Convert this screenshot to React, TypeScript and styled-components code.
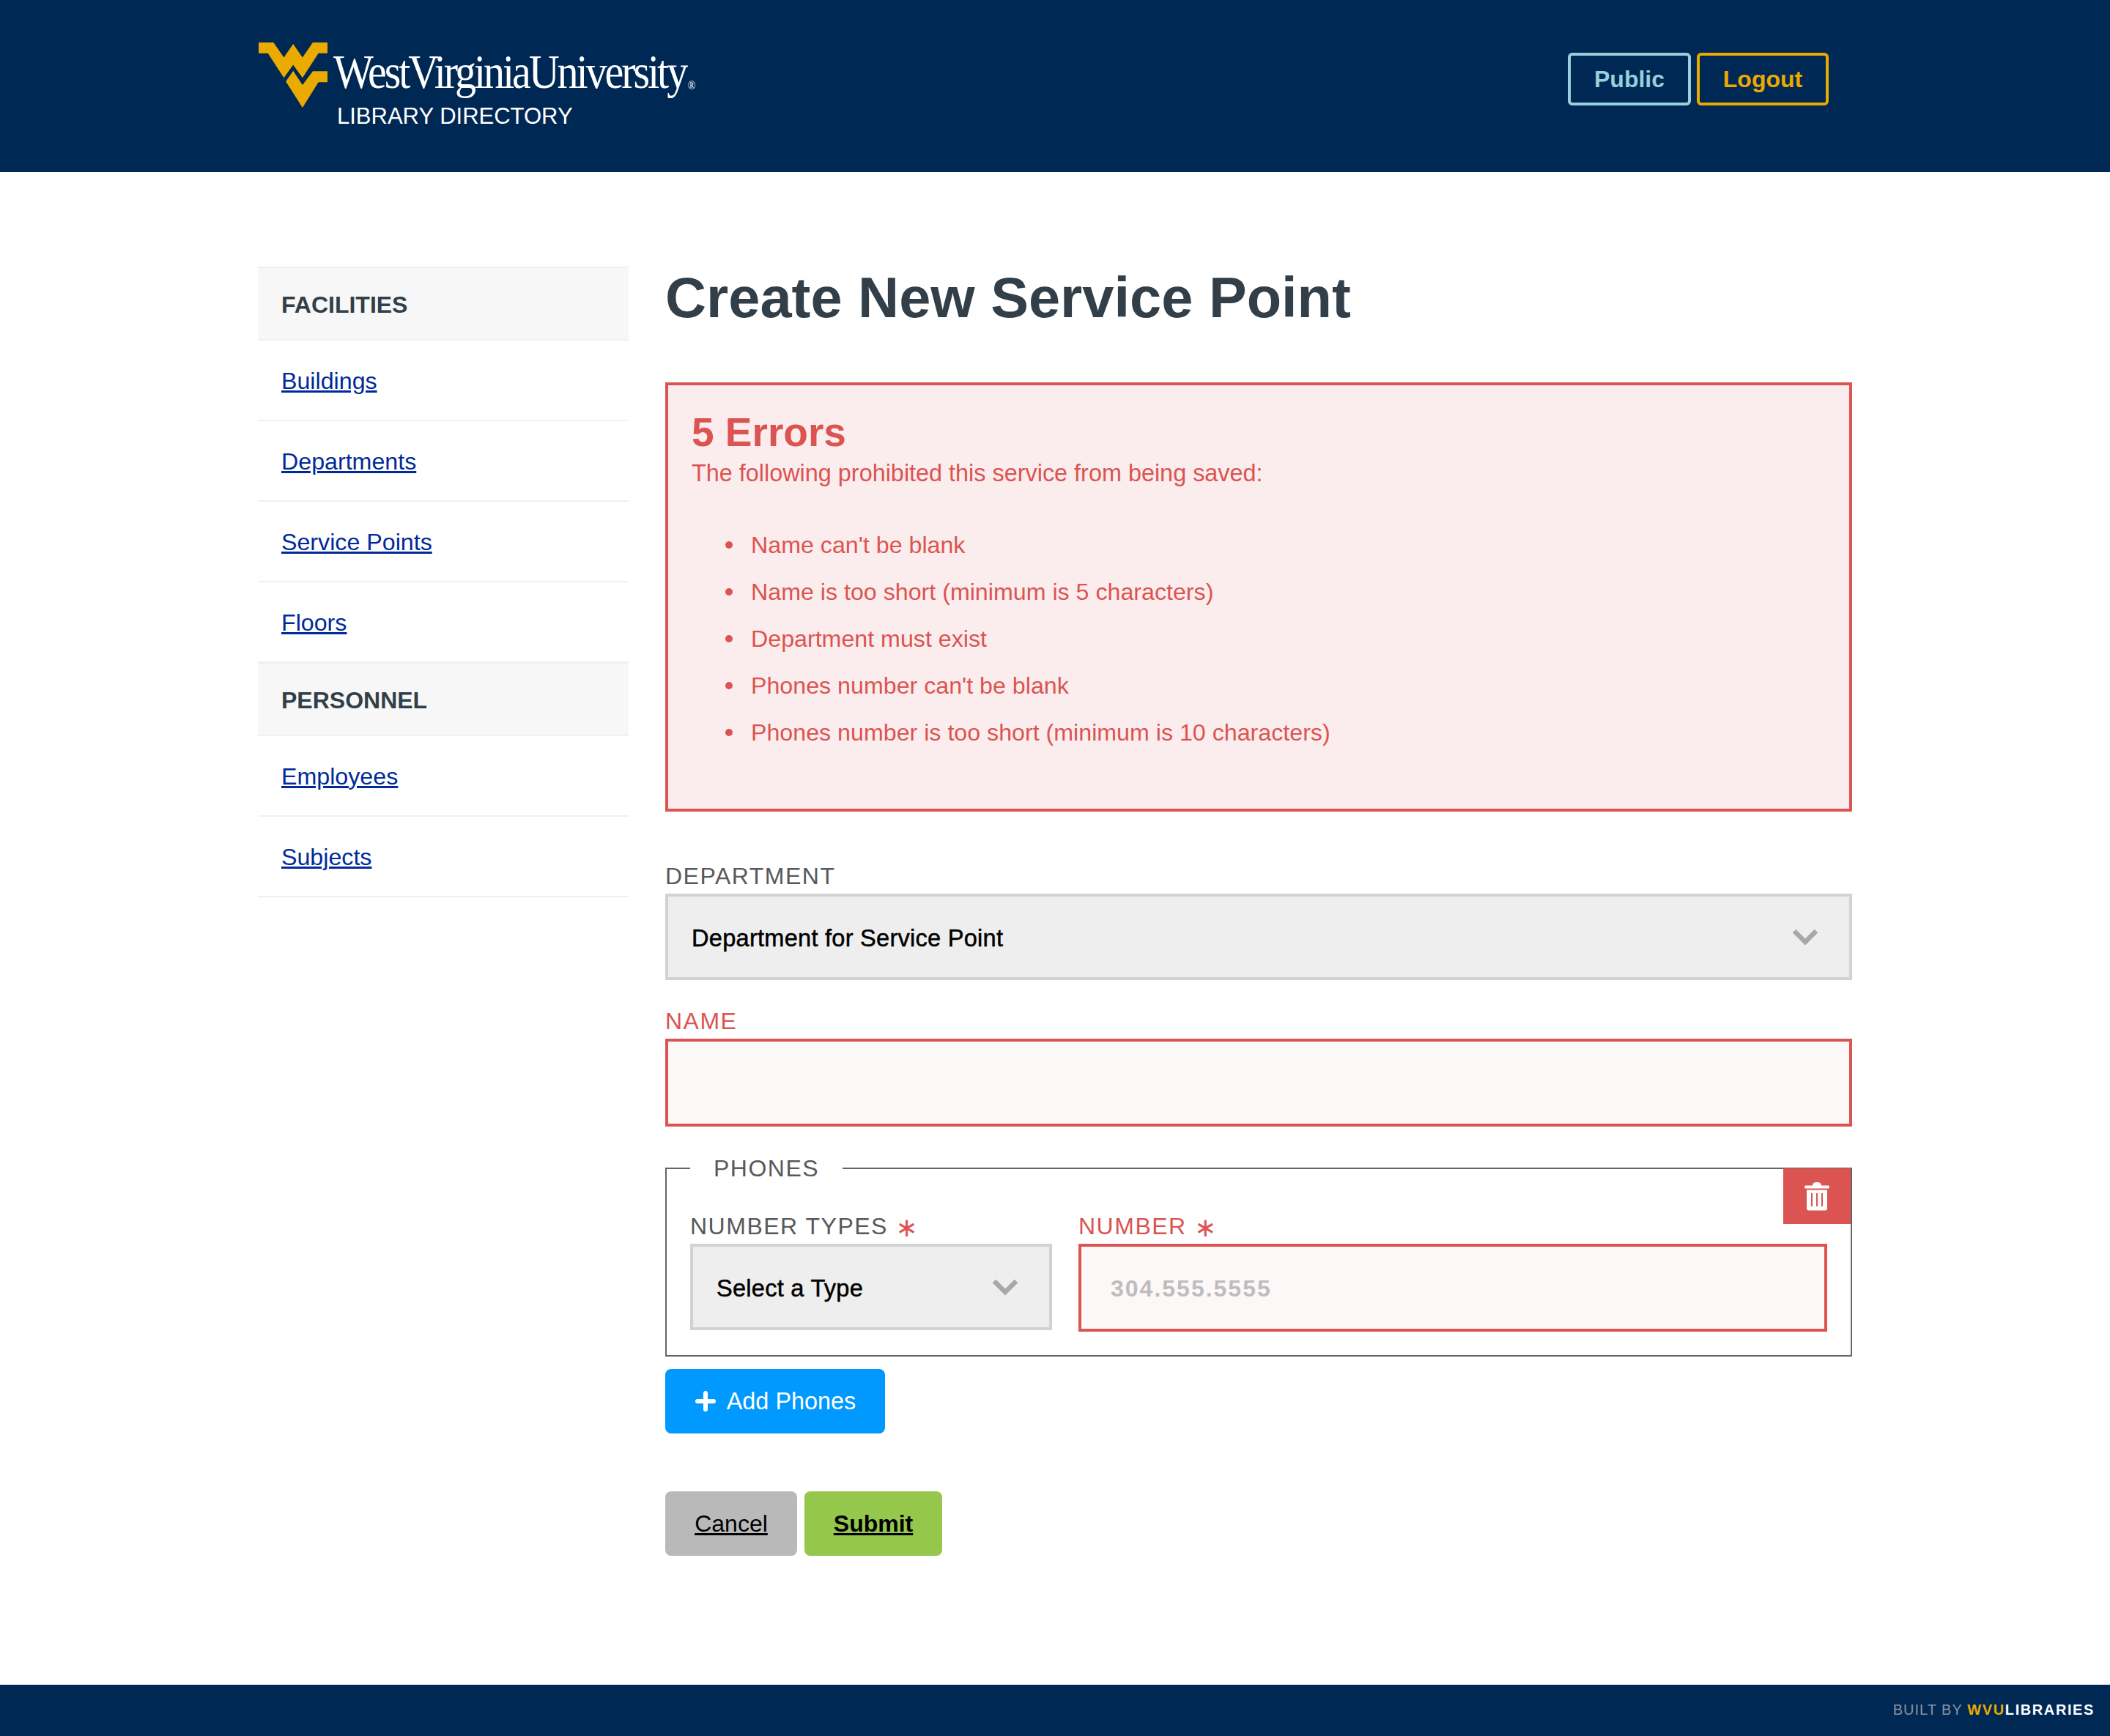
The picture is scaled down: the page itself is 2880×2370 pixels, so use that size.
import React from 'react';
import styled, { createGlobalStyle } from 'styled-components';

const NAVY = '#002855';
const GOLD = '#eaaa00';
const RED = '#db5451';
const SANS = '"Liberation Sans", Arial, sans-serif';

const GlobalStyle = createGlobalStyle`
  html, body { margin: 0; padding: 0; background: #fff; }
  body { font-family: ${SANS}; font-size: 32px; color: #333; }
  * { box-sizing: border-box; }
`;

const Page = styled.div`
  min-height: 100vh;
  display: flex;
  flex-direction: column;
`;

const Header = styled.header`
  height: 235px;
  background: ${NAVY};
  padding: 58px 384px 0 353px;
  display: flex;
  justify-content: space-between;
  align-items: flex-start;
`;

const Brand = styled.div`
  display: flex;
  align-items: flex-start;
  gap: 8px;
`;

const BrandMark = styled.svg`
  width: 94px;
  height: 89px;
  flex: none;
`;

const BrandText = styled.div`
  display: flex;
  flex-direction: column;
  color: #fff;
`;

const Wordmark = styled.div`
  font-family: "Liberation Serif", "Times New Roman", serif;
  font-size: 66px;
  line-height: 70px;
  letter-spacing: -3.5px;
  margin-top: 5px;
  white-space: nowrap;
  transform: scaleX(0.88);
  transform-origin: left center;
`;

const WordmarkReg = styled.sup`
  font-size: 16px;
  letter-spacing: 0;
  line-height: 0;
  vertical-align: -2px;
  margin-left: 3px;
`;

const Subtitle = styled.div`
  font-size: 31px;
  line-height: 36px;
  margin: 8px 0 0 5px;
`;

const HeaderActions = styled.div`
  display: flex;
  gap: 8px;
  margin-top: 14px;
`;

const OutlineButton = styled.a<{ $color: string; $width: number }>`
  width: ${({ $width }) => $width}px;
  height: 72px;
  display: flex;
  align-items: center;
  justify-content: center;
  border: 4px solid ${({ $color }) => $color};
  border-radius: 6px;
  color: ${({ $color }) => $color};
  font-weight: 700;
  font-size: 32px;
`;

const Body = styled.div`
  flex: 1;
  width: 2176px;
  margin: 0 auto;
  padding-top: 130px;
  display: grid;
  grid-template-columns: 506px 1620px;
  column-gap: 50px;
  align-items: start;
`;

const SideNav = styled.nav`
  display: flex;
  flex-direction: column;
`;

const NavHeading = styled.div`
  height: 101px;
  display: flex;
  align-items: center;
  padding: 3px 0 0 32px;
  margin-top: -1px;
  background: #f7f7f7;
  border-top: 2px solid #f0f0f0;
  border-bottom: 2px solid #f0f0f0;
  font-weight: 700;
  font-size: 32px;
  color: #333f48;
`;

const NavItem = styled.div`
  height: 110px;
  display: flex;
  align-items: center;
  padding: 2px 0 0 32px;
  border-bottom: 2px solid #f0f0f0;
`;

const NavLink = styled.a`
  color: #002a9a;
  text-decoration: underline;
  font-size: 32.2px;
`;

const Main = styled.main`
  display: flex;
  flex-direction: column;
`;

const Title = styled.h1`
  margin: -2px 0 0;
  font-size: 77.6px;
  line-height: 86px;
  font-weight: 700;
  color: #333f48;
`;

const ErrorBox = styled.div`
  margin-top: 73px;
  height: 586px;
  border: 4px solid ${RED};
  background: #fbeded;
  color: ${RED};
  padding: 32px 32px 0;
`;

const ErrorTitle = styled.h2`
  margin: 0;
  font-size: 55px;
  line-height: 64px;
  font-weight: 700;
`;

const ErrorLead = styled.p`
  margin: 2px 0 0;
  font-size: 32.4px;
  line-height: 44px;
`;

const ErrorList = styled.ul`
  margin: 44px 0 0;
  padding: 0 0 0 46px;
  list-style: none;
`;

const ErrorItem = styled.li`
  display: flex;
  align-items: center;
  gap: 25px;
  font-size: 32.2px;
  line-height: 64px;

  &::before {
    content: '';
    width: 10px;
    height: 10px;
    border-radius: 50%;
    background: ${RED};
    flex: none;
  }
`;

const Field = styled.div<{ $top?: number }>`
  display: flex;
  flex-direction: column;
  margin-top: ${({ $top }) => $top ?? 0}px;
`;

const Label = styled.label<{ $error?: boolean }>`
  font-size: 32px;
  line-height: 40px;
  letter-spacing: 1.5px;
  margin-bottom: 4px;
  color: ${({ $error }) => ($error ? RED : '#58595b')};
`;

const Star = styled.span`
  color: ${RED};
  font-family: "DejaVu Sans", sans-serif;
  font-size: 36px;
  line-height: 0;
  vertical-align: -3px;
  font-weight: 400;
`;

const SelectBox = styled.div<{ $height: number }>`
  position: relative;
  width: 100%;
  height: ${({ $height }) => $height}px;
  display: flex;
  align-items: center;
  border: 4px solid #d2d2d2;
  background: #eee;
  color: #000;
  font-size: 32.6px;
  letter-spacing: 0.25px;
  padding: 3px 32px 0;
  -webkit-text-stroke: 0.5px #000;
`;

const Chevron = styled.svg<{ $right: number }>`
  position: absolute;
  top: 50%;
  right: ${({ $right }) => $right}px;
  width: 36px;
  height: 24px;
  margin-top: -12px;
`;

const TextInput = styled.input<{ $height: number }>`
  width: 100%;
  height: ${({ $height }) => $height}px;
  border: 4px solid ${RED};
  background: #fdf8f8;
  border-radius: 0;
  padding: 3px 40px 0;
  font-family: ${SANS};
  font-size: 32px;
  outline: none;

  &::placeholder {
    color: #bdbdbd;
    font-weight: 700;
    letter-spacing: 2px;
  }
`;

const PhonesSet = styled.fieldset`
  position: relative;
  margin: 37px 0 0;
  padding: 39px 32px 32px;
  min-width: 0;
  border: 2px solid #666;
`;

const PhonesLegend = styled.legend`
  margin-left: 0;
  padding: 0 32px;
  font-size: 32px;
  line-height: 40px;
  letter-spacing: 1.5px;
  color: #58595b;
`;

const PhoneGrid = styled.div`
  display: grid;
  grid-template-columns: 494px 1fr;
  column-gap: 36px;
`;

const DeleteButton = styled.button`
  position: absolute;
  top: -20px;
  right: 0;
  width: 92px;
  height: 76px;
  border: 0;
  padding: 0;
  background: ${RED};
  display: flex;
  align-items: center;
  justify-content: center;
`;

const TrashIcon = styled.svg`
  width: 34px;
  height: 40px;
`;

const AddButton = styled.a`
  margin-top: 17px;
  width: 300px;
  height: 88px;
  display: flex;
  align-items: center;
  justify-content: center;
  gap: 14px;
  border-radius: 8px;
  background: #0099ff;
  color: #fff;
  font-size: 32.4px;
`;

const PlusIcon = styled.svg`
  width: 30px;
  height: 30px;
`;

const FormActions = styled.div`
  display: flex;
  gap: 10px;
  margin-top: 79px;
`;

const ActionButton = styled.a<{ $bg: string; $width: number; $bold?: boolean }>`
  width: ${({ $width }) => $width}px;
  height: 88px;
  display: flex;
  align-items: center;
  justify-content: center;
  border-radius: 8px;
  background: ${({ $bg }) => $bg};
  color: #000;
  font-size: 32px;
  font-weight: ${({ $bold }) => ($bold ? 700 : 400)};
  text-decoration: underline;
`;

const Footer = styled.footer`
  height: 70px;
  background: ${NAVY};
  display: flex;
  align-items: center;
  justify-content: flex-end;
  padding: 0 21px 2px 0;
  font-size: 20px;
  letter-spacing: 1px;
  color: #8c929c;
`;

const FooterBrand = styled.span<{ $color: string }>`
  color: ${({ $color }) => $color};
  font-weight: 700;
  letter-spacing: 1.6px;
`;

const ERRORS = [
  "Name can't be blank",
  'Name is too short (minimum is 5 characters)',
  'Department must exist',
  "Phones number can't be blank",
  'Phones number is too short (minimum is 10 characters)',
];

const ChevronDown: React.FC<{ right: number }> = ({ right }) => (
  <Chevron $right={right} viewBox="0 0 36 24">
    <path d="M3 4 L18 19 L33 4" fill="none" stroke="#a8a8a8" strokeWidth="6.5" />
  </Chevron>
);

export default function App() {
  return (
    <Page>
      <GlobalStyle />
      <Header>
        <Brand>
          <BrandMark viewBox="24 24 281 266">
            <path
              fill={GOLD}
              d="M24 24H85L127 85L165 30L203 85L245 24H305V68H268L203 168L165 115L127 168L62 68H24Z"
            />
            <path fill={GOLD} d="M135 183L165 140L203 197L245 141H305V186H268L203 290Z" />
          </BrandMark>
          <BrandText>
            <Wordmark>
              WestVirginiaUniversity<WordmarkReg>®</WordmarkReg>
            </Wordmark>
            <Subtitle>LIBRARY DIRECTORY</Subtitle>
          </BrandText>
        </Brand>
        <HeaderActions>
          <OutlineButton $color="#98cfdd" $width={168}>Public</OutlineButton>
          <OutlineButton $color={GOLD} $width={180}>Logout</OutlineButton>
        </HeaderActions>
      </Header>

      <Body>
        <SideNav>
          <NavHeading>FACILITIES</NavHeading>
          <NavItem><NavLink>Buildings</NavLink></NavItem>
          <NavItem><NavLink>Departments</NavLink></NavItem>
          <NavItem><NavLink>Service Points</NavLink></NavItem>
          <NavItem><NavLink>Floors</NavLink></NavItem>
          <NavHeading>PERSONNEL</NavHeading>
          <NavItem><NavLink>Employees</NavLink></NavItem>
          <NavItem><NavLink>Subjects</NavLink></NavItem>
        </SideNav>

        <Main>
          <Title>Create New Service Point</Title>

          <ErrorBox>
            <ErrorTitle>5 Errors</ErrorTitle>
            <ErrorLead>The following prohibited this service from being saved:</ErrorLead>
            <ErrorList>
              {ERRORS.map((error) => (
                <ErrorItem key={error}>{error}</ErrorItem>
              ))}
            </ErrorList>
          </ErrorBox>

          <Field $top={68}>
            <Label>DEPARTMENT</Label>
            <SelectBox $height={118}>
              Department for Service Point
              <ChevronDown right={42} />
            </SelectBox>
          </Field>

          <Field $top={36}>
            <Label $error>NAME</Label>
            <TextInput $height={120} />
          </Field>

          <PhonesSet>
            <PhonesLegend>PHONES</PhonesLegend>
            <DeleteButton>
              <TrashIcon viewBox="0 0 34 40">
                <path
                  fill="#fff"
                  d="M1 5.500H11C11.500 2 13 1 17 1S22.500 2 23 5.500H33C34 5.500 34 9.500 33 9.500H1C0 9.500 0 5.500 1 5.500ZM3 11.500H31V37C31 38.500 30 39.500 28.500 39.500H5.500C4 39.500 3 38.500 3 37Z"
                />
                <path stroke={RED} strokeWidth="2" d="M10 16V34M17 16V34M24 16V34" />
              </TrashIcon>
            </DeleteButton>
            <PhoneGrid>
              <Field>
                <Label>NUMBER TYPES <Star>∗</Star></Label>
                <SelectBox $height={118}>
                  Select a Type
                  <ChevronDown right={42} />
                </SelectBox>
              </Field>
              <Field>
                <Label $error>NUMBER <Star>∗</Star></Label>
                <TextInput $height={120} placeholder="304.555.5555" />
              </Field>
            </PhoneGrid>
          </PhonesSet>

          <AddButton>
            <PlusIcon viewBox="0 0 30 30">
              <path d="M15 4V26M4 15H26" stroke="#fff" strokeWidth="6" strokeLinecap="round" />
            </PlusIcon>
            Add Phones
          </AddButton>

          <FormActions>
            <ActionButton $bg="#b9b9b9" $width={180}>Cancel</ActionButton>
            <ActionButton $bg="#95c74c" $width={188} $bold>Submit</ActionButton>
          </FormActions>
        </Main>
      </Body>

      <Footer>
        BUILT BY&nbsp;
        <FooterBrand $color={GOLD}>WVU</FooterBrand>
        <FooterBrand $color="#fff">LIBRARIES</FooterBrand>
      </Footer>
    </Page>
  );
}
